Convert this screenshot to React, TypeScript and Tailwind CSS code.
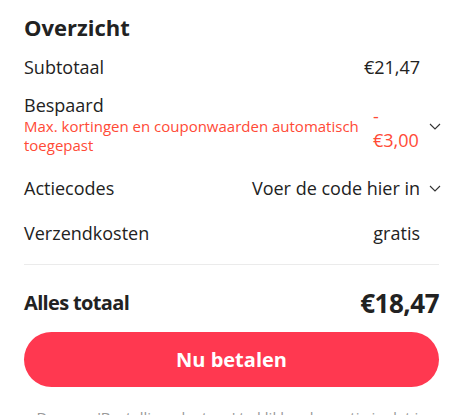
import React from 'react';

function Chevron() {
	return (
		<svg width="12" height="7" viewBox="0 0 12 7" fill="none" className="block translate-x-[2px]">
			<path d="M1 1l5 5 5-5" stroke="#333" strokeWidth="1.1" />
		</svg>
	);
}

function Row({
	label,
	value,
	chevron,
	className = '',
}: {
	label: React.ReactNode;
	value: React.ReactNode;
	chevron?: boolean;
	className?: string;
}) {
	return (
		<div className={`flex items-center ${className}`}>
			<div className="flex-1 text-[18px] leading-[24px] text-[#222]">{label}</div>
			<div className="text-[18px] leading-[24px] text-[#222] text-right">{value}</div>
			<div className="w-[19px] flex justify-end">{chevron && <Chevron />}</div>
		</div>
	);
}

export default function App() {
	return (
		<div
			className="w-[468px] h-[415px] overflow-hidden bg-white"
			style={{ fontFamily: '"Open Sans", "Noto Sans", sans-serif' }}
		>
			<div className="w-[415px] ml-6 pt-[12px]">
				<h2 className="text-[22px] leading-[30px] font-bold text-[#222]">Overzicht</h2>

				<Row className="mt-[13px]" label="Subtotaal" value="€21,47" />

				<div className="flex items-start mt-[14px]">
					<div className="flex-1">
						<div className="text-[18px] leading-[24px] text-[#222]">Bespaard</div>
						<div className="text-[15px] leading-[19px] text-[#ff4a36] w-[345px]">
							Max. kortingen en couponwaarden automatisch toegepast
						</div>
					</div>
					<div className="w-[47px] mt-[11px] text-[18px] leading-[24px] text-[#ff4a36]">- €3,00</div>
					<div className="w-[19px] mt-[30px] flex justify-end">
						<Chevron />
					</div>
				</div>

				<Row className="mt-[21px]" label="Actiecodes" value="Voer de code hier in" chevron />
				<Row className="mt-[21px]" label="Verzendkosten" value="gratis" />

				<div className="h-px bg-[#ebebeb] mt-[19px]" />

				<div className="flex items-center justify-between mt-[22px] h-[32px]">
					<div className="text-[20px] leading-[28px] font-bold tracking-[-0.65px] text-[#222]">
						Alles totaal
					</div>
					<div className="text-[26px] leading-[32px] font-bold tracking-[-0.5px] text-[#222]">€18,47</div>
				</div>

				<button className="mt-[13px] w-full h-[55px] rounded-full bg-[#ff3850] text-white text-[20px] font-bold">
					Nu betalen
				</button>

				<p className="mt-[20px] px-3 text-[15px] leading-[20px] text-[#999] text-center">
					Door op 'Bestelling plaatsen' te klikken bevestig je dat je de voorwaarden accepteert.
				</p>
			</div>
		</div>
	);
}
